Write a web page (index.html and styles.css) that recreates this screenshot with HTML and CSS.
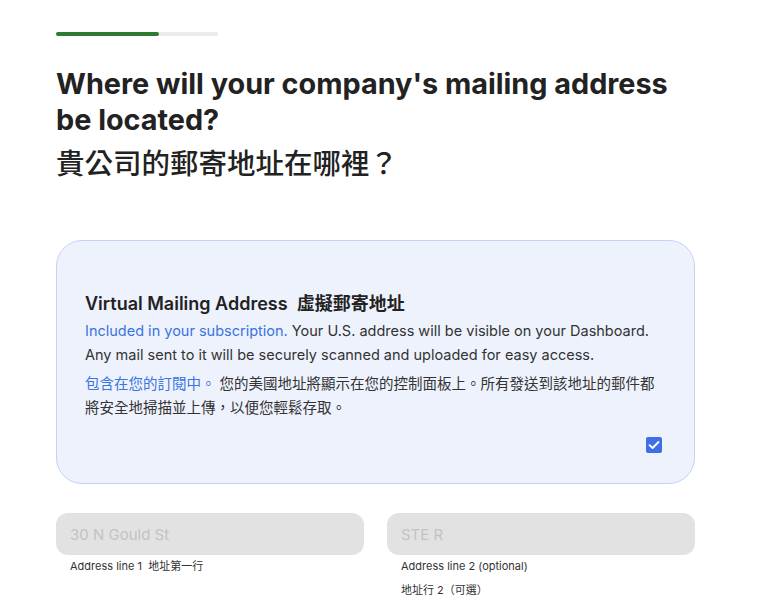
FILE: index.html
```html
<!DOCTYPE html>
<html lang="zh-Hant">
  <head>
    <meta charset="UTF-8" />
    <meta name="viewport" content="width=device-width, initial-scale=1.0" />
    <title>Mailing address</title>
    <link rel="stylesheet" href="styles.css">
  </head>
  <body>
    <div class="page">
      <div class="progreso"><div class="progreso-barra"></div></div>
      <h1 class="titulo">Where will your company's mailing address be located?</h1>
      <h2 class="titulo-zh">貴公司的郵寄地址在哪裡？</h2>

      <div class="tarjeta">
        <h3>Virtual Mailing Address&nbsp; 虛擬郵寄地址</h3>
        <p><span class="azul">Included in your subscription.</span> Your U.S. address will be visible on your Dashboard. Any mail sent to it will be securely scanned and uploaded for easy access.</p>
        <p><span class="azul">包含在您的訂閱中。</span> 您的美國地址將顯示在您的控制面板上。所有發送到該地址的郵件都將安全地掃描並上傳，以便您輕鬆存取。</p>
        <div class="check-fila">
          <span class="check">
            <svg width="12" height="10" viewBox="0 0 12 10"><path d="M1.5 5.2 L4.6 8 L10.5 2" fill="none" stroke="#fff" stroke-width="1.8" stroke-linecap="round" stroke-linejoin="round"/></svg>
          </span>
        </div>
      </div>

      <div class="campos">
        <div class="campo">
          <input type="text" value="30 N Gould St" disabled />
          <label>Address line 1&nbsp; 地址第一行</label>
        </div>
        <div class="campo">
          <input type="text" value="STE R" disabled />
          <label>Address line 2 (optional)</label>
          <label>地址行 2（可選）</label>
        </div>
      </div>
    </div>
  </body>
</html>
```

FILE: styles.css
```css
body {
  margin: 0;
  background: #fff;
  font-family: Inter, "Noto Sans CJK TC", sans-serif;
  color: #222;
}
.page {
  padding: 32px 73px 0 56px;
}
.progreso {
  width: 162px;
  height: 4px;
  border-radius: 2px;
  background: #ebebf0;
}
.progreso-barra {
  width: 103px;
  height: 4px;
  border-radius: 2px;
  background: #2f7a32;
}
.titulo {
  margin: 30px 0 0;
  max-width: 630px;
  font-size: 28.8px;
  line-height: 36px;
  font-weight: 700;
  color: #222;
}
.titulo-zh {
  margin: 6px 0 0;
  font-size: 28.5px;
  line-height: 40px;
  font-weight: 500;
  color: #222;
}
.tarjeta {
  margin-top: 56px;
  background: #eef2fd;
  border: 1px solid #c3d2f6;
  border-radius: 26px;
  padding: 48px 32px 30px 28px;
}
.tarjeta h3 {
  margin: 0 0 4px;
  font-size: 18px;
  font-weight: 600;
  color: #222;
}
.tarjeta p {
  margin: 0 0 5px;
  font-size: 14.5px;
  line-height: 24px;
  color: #333;
}
.azul {
  color: #3a74e0;
}
.check-fila {
  display: flex;
  justify-content: flex-end;
  padding-top: 12px;
}
.check {
  width: 16px;
  height: 16px;
  border-radius: 2px;
  background: #3f6fe6;
  display: flex;
  align-items: center;
  justify-content: center;
}
.campos {
  display: grid;
  grid-template-columns: 1fr 1fr;
  gap: 23px;
  margin-top: 29px;
}
.campo {
  display: flex;
  flex-direction: column;
}
.campo input {
  height: 42px;
  border: none;
  border-radius: 12px;
  background: #e2e2e2;
  padding: 0 14px;
  font-family: Inter, sans-serif;
  font-size: 15px;
  color: #c3c3c3;
}
.campo label {
  font-size: 11px;
  color: #333;
  padding: 5px 14px 7px;
  line-height: 12px;
}
```
